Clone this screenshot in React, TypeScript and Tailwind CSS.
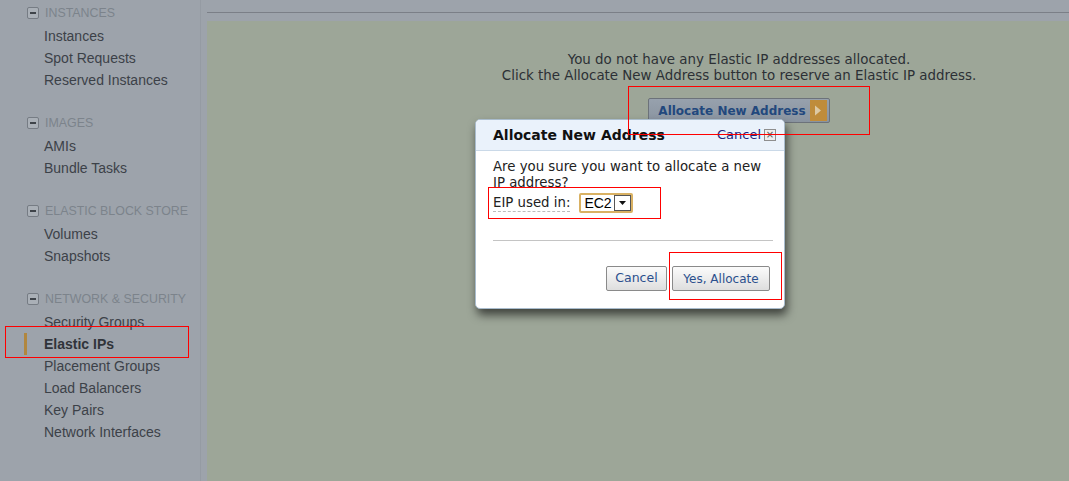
import React from "react";

type NavGroup = {
  title: string;
  items: string[];
};

const groups: NavGroup[] = [
  { title: "INSTANCES", items: ["Instances", "Spot Requests", "Reserved Instances"] },
  { title: "IMAGES", items: ["AMIs", "Bundle Tasks"] },
  { title: "ELASTIC BLOCK STORE", items: ["Volumes", "Snapshots"] },
  {
    title: "NETWORK & SECURITY",
    items: [
      "Security Groups",
      "Elastic IPs",
      "Placement Groups",
      "Load Balancers",
      "Key Pairs",
      "Network Interfaces",
    ],
  },
];

const ACTIVE = "Elastic IPs";

function CollapseIcon() {
  return (
    <span className="flex h-[12px] w-[12px] items-center justify-center rounded-[2px] border border-[#767c84] bg-[#aab0b7]">
      <span className="h-[2px] w-[6px] bg-[#3f444a]" />
    </span>
  );
}

function Sidebar() {
  return (
    <aside className="w-[201px] shrink-0 border-r border-r-[#959ba3] pt-[2px] font-['Liberation_Sans',Arial,sans-serif]">
      {groups.map((g, gi) => (
        <div key={g.title} className={gi > 0 ? "mt-[21px]" : ""}>
          <div className="mb-[1px] flex h-[22px] items-center gap-[6px] pl-[27px] text-[12.4px] text-[#7c838b]">
            <CollapseIcon />
            <span>{g.title}</span>
          </div>
          {g.items.map((item) =>
            item === ACTIVE ? (
              <div
                key={item}
                className="ml-[24px] flex h-[22px] items-center border-l-[3px] border-[#b1873f] pl-[17px] text-[14px] font-bold text-[#30343a]"
              >
                {item}
              </div>
            ) : (
              <div
                key={item}
                className="ml-[24px] flex h-[22px] items-center pl-[20px] text-[14px] text-[#3c4148]"
              >
                {item}
              </div>
            )
          )}
        </div>
      ))}
    </aside>
  );
}

function AllocateButton() {
  return (
    <div className="flex h-[25px] items-center gap-[4px] rounded-[2px] border border-[#6c727a] bg-gradient-to-b from-[#97a1ad] to-[#8a94a0] pl-[9px] pr-[2px]">
      <span className="text-[12px] font-bold text-[#22487d]">Allocate New Address</span>
      <span className="flex h-[21px] w-[17px] items-center justify-center bg-[#bf8c3b]">
        <svg width="8" height="11" viewBox="0 0 8 11">
          <path d="M1 0.5 L7 5.5 L1 10.5 Z" fill="#ddc9a4" />
        </svg>
      </span>
    </div>
  );
}

function Modal() {
  return (
    <div className="absolute left-[475px] top-[119px] w-[310px] overflow-hidden rounded-[5px] border border-[#a9bccd] bg-white font-['DejaVu_Sans',Verdana,sans-serif] shadow-[2px_6px_10px_rgba(0,0,0,0.6)]">
      <div className="flex h-[31px] items-center justify-between border-b border-[#cad9e8] bg-[#eaf2fb] pl-[17px] pr-[8px]">
        <span className="text-[14px] font-bold text-[#111]">Allocate New Address</span>
        <span className="flex items-center gap-[3px]">
          <span className="text-[13px] text-[#23237a]">Cancel</span>
          <span className="flex h-[12px] w-[12px] items-center justify-center border border-[#8e8e8e] bg-[#eeeeee] text-[10px] leading-none text-[#555]">
            ×
          </span>
        </span>
      </div>
      <div className="pl-[17px] pr-[11px] pt-[8px] pb-[17px]">
        <p className="w-[276px] text-[13.3px] leading-[16px] text-[#222]">
          Are you sure you want to allocate a new IP address?
        </p>
        <div className="mt-[2px] flex items-center gap-[9px]">
          <span className="border-b border-dashed border-[#bbb] text-[13.3px] leading-[16px] text-[#222]">
            EIP used in:
          </span>
          <div className="flex h-[20px] w-[54px] items-stretch rounded-[2px] border-2 border-[#d9b163] bg-white">
            <span className="flex flex-1 items-center pl-[3px] font-['Liberation_Sans',Arial,sans-serif] text-[14px] text-black">
              EC2
            </span>
            <span className="flex w-[17px] items-center justify-center border border-[#555]">
              <svg width="7" height="4" viewBox="0 0 7 4">
                <path d="M0 0 H7 L3.5 4 Z" fill="#111" />
              </svg>
            </span>
          </div>
        </div>
        <div className="mt-[27px] h-px bg-[#c4c4c4]" />
        <div className="mt-[25px] flex justify-end gap-[5px] pr-[3px]">
          <button className="h-[25px] w-[61px] rounded-[2px] border border-[#8a8a8a] bg-gradient-to-b from-[#fbfbfb] to-[#dedede] text-[12.5px] text-[#2b4f8d]">
            Cancel
          </button>
          <button className="h-[25px] w-[98px] rounded-[2px] border border-[#8a8a8a] bg-gradient-to-b from-[#fbfbfb] to-[#dedede] text-[12px] text-[#2b4f8d]">
            Yes, Allocate
          </button>
        </div>
      </div>
    </div>
  );
}

export default function App() {
  return (
    <div className="relative flex h-[481px] w-[1069px] overflow-hidden bg-[#9da3ab]">
      <Sidebar />
      <main className="flex min-w-0 flex-1 flex-col pl-[6px]">
        <div className="h-[21px] shrink-0 pt-[12px]">
          <div className="h-px bg-[#7b7f87]" />
        </div>
        <div className="flex-1 overflow-hidden bg-[#9da698]">
          <div className="flex w-[1064px] flex-col items-center pt-[31px] font-['DejaVu_Sans',Verdana,sans-serif] text-[13.4px] leading-[16px] text-[#2c3035]">
            <p>You do not have any Elastic IP addresses allocated.</p>
            <p>Click the Allocate New Address button to reserve an Elastic IP address.</p>
            <div className="mt-[14px]">
              <AllocateButton />
            </div>
          </div>
        </div>
      </main>

      <Modal />

      {/* red annotation boxes */}
      <div className="pointer-events-none absolute left-[5px] top-[326px] h-[32px] w-[184px] border border-[#ff0000]" />
      <div className="pointer-events-none absolute left-[628px] top-[86px] h-[49px] w-[242px] border border-[#ff0000]" />
      <div className="pointer-events-none absolute left-[488px] top-[187px] h-[32px] w-[173px] border border-[#ff0000]" />
      <div className="pointer-events-none absolute left-[669px] top-[252px] h-[48px] w-[113px] border border-[#ff0000]" />
    </div>
  );
}
